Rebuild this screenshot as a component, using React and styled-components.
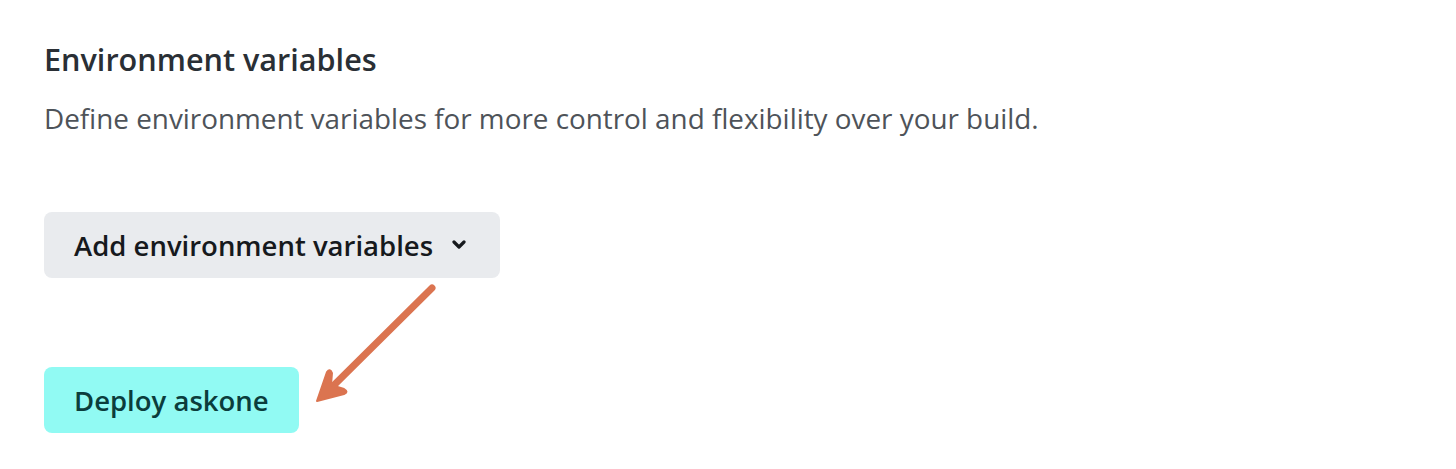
import React from 'react'
import styled, { createGlobalStyle } from 'styled-components';

const GlobalStyle = createGlobalStyle`
    body {
        margin: 0;
        background: #ffffff;
        font-family: "Open Sans", "Noto Sans", sans-serif;
    }
`;

const Page = styled.div`
    position: relative;
    width: 1456px;
    height: 469px;
    padding: 39px 44px 0;
    box-sizing: border-box;
    display: flex;
    flex-direction: column;
    align-items: flex-start;
`;

const Title = styled.h2`
    margin: 0;
    font-size: 30.6px;
    font-weight: 600;
    color: #2a2f35;
    line-height: 40px;
`;

const Desc = styled.p`
    margin: 19px 0 0;
    font-size: 27.85px;
    font-weight: 400;
    color: #4e5359;
    line-height: 40px;
`;

const Button = styled.button`
    display: flex;
    align-items: center;
    gap: 19px;
    height: 66px;
    padding: ${({ $primary }) => $primary ? '0 30px 0 30px' : '0 34px 0 30px'};
    border: none;
    border-radius: 8px;
    font-family: inherit;
    font-size: 27.5px;
    font-weight: 600;
    cursor: pointer;
    background: ${({ $primary }) => $primary ? '#91faf3' : '#e9ebee'};
    color: ${({ $primary }) => $primary ? '#0b3d3c' : '#16191d'};
    margin-top: ${({ $top }) => $top}px;
`;

const Chevron = () => (
    <svg width="14" height="10" viewBox="0 0 14 10">
        <path d="M2 2l5 5 5-5" fill="none" stroke="#16191d" strokeWidth="3.2" strokeLinecap="round" strokeLinejoin="round" />
    </svg>
);

// annotation arrow pointing at the deploy button
const Arrow = styled.svg`
    position: absolute;
    left: 300px;
    top: 275px;
`;

const App = () => {
    return (
        <>
            <GlobalStyle />
            <Page>
                <Title>Environment variables</Title>
                <Desc>Define environment variables for more control and flexibility over your build.</Desc>
                <Button $top={74}>
                    Add environment variables
                    <Chevron />
                </Button>
                <Button $primary $top={89}>Deploy askone</Button>
                <Arrow width="150" height="140" viewBox="0 0 150 140">
                    <path d="M132 13L24 120" stroke="#db7450" strokeWidth="7" strokeLinecap="round" fill="none" />
                    <path d="M17 126L27 97Q30 93 32 98L31 110L44 114Q49 117 44 119Z" fill="#db7450" stroke="#db7450" strokeWidth="2" strokeLinejoin="round" />
                </Arrow>
            </Page>
        </>
    )
}

export default App;
